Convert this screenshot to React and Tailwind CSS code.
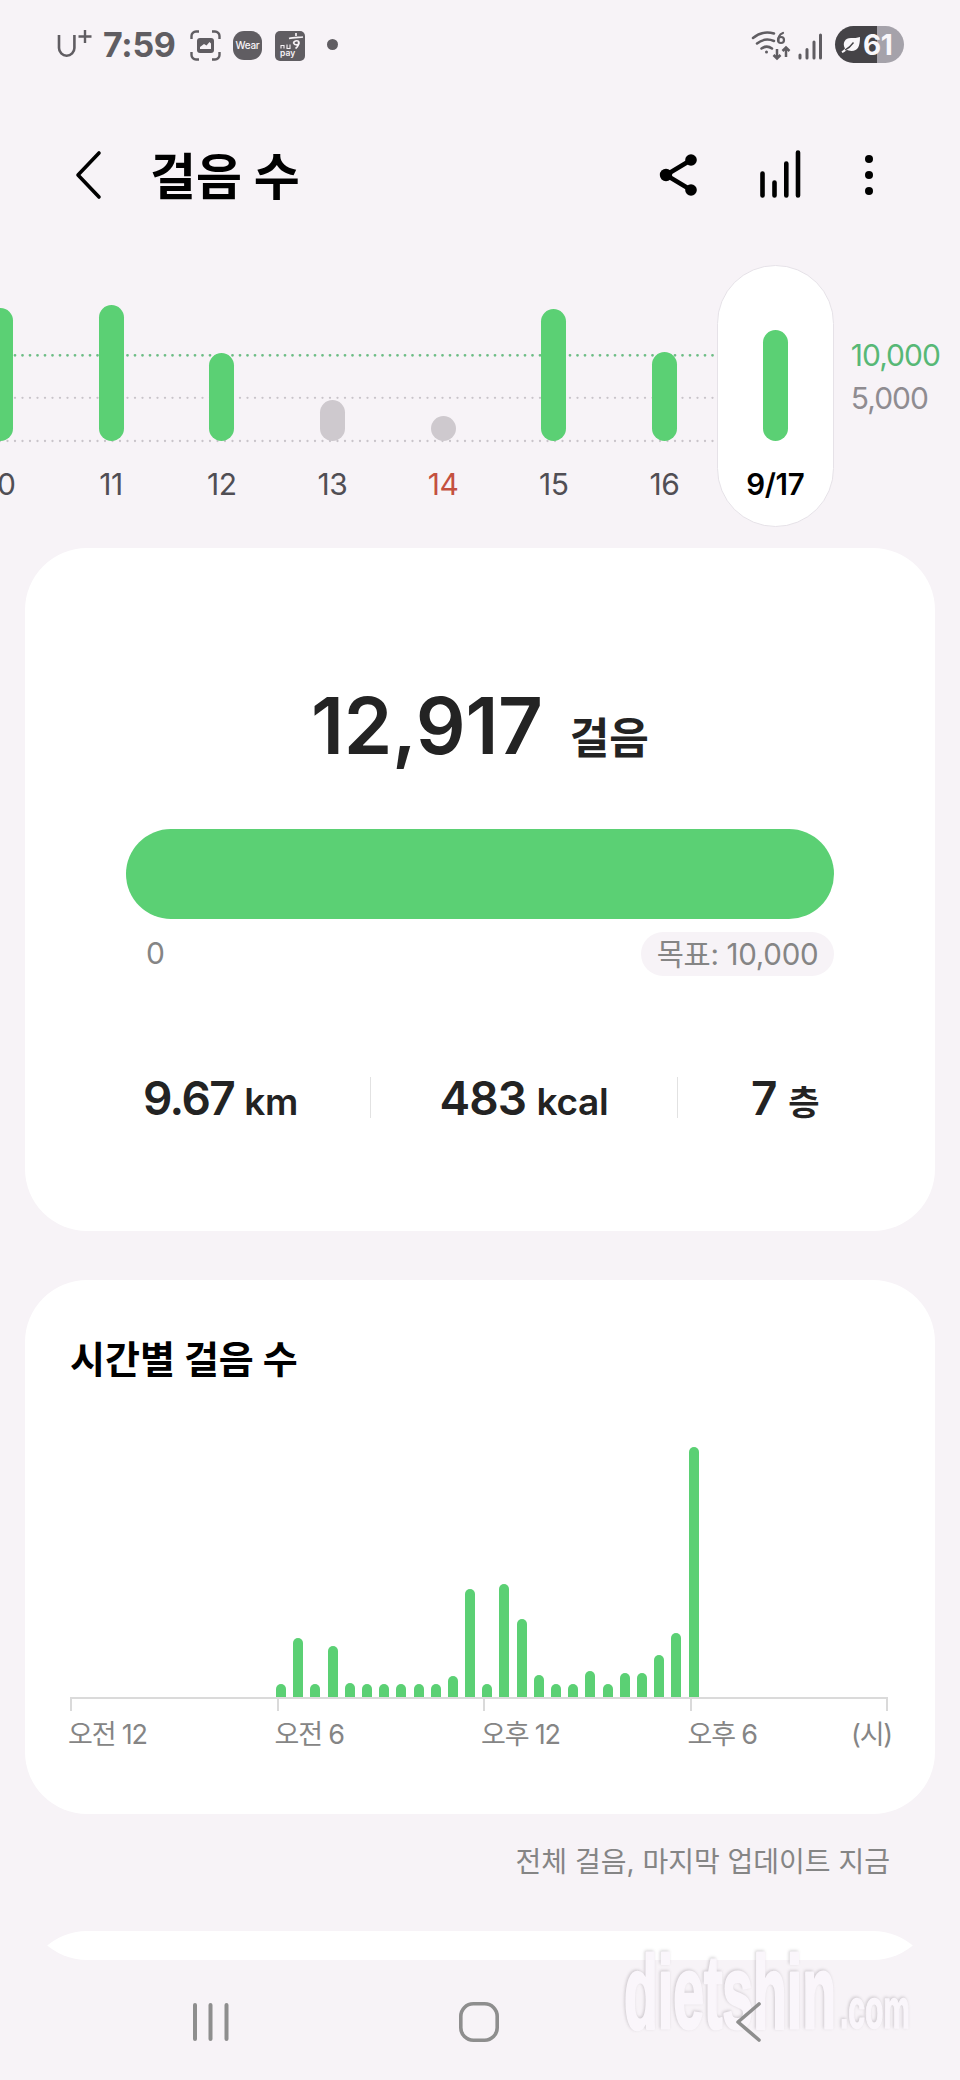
const DAYS = [
  { label: '10', height: 133 },
  { label: '11', height: 136 },
  { label: '12', height: 88 },
  { label: '13', height: 41, missed: true },
  { label: '14', height: 25, missed: true, holiday: true },
  { label: '15', height: 132 },
  { label: '16', height: 89 },
  { label: '9/17', height: 111, selected: true },
];

// one bar per half hour, starting at 6 AM
const HALF_HOURS = [
  13, 59, 13, 51, 14, 13, 13, 13, 13, 13, 21, 108, 13, 113, 78, 22, 13, 13, 26, 13, 24, 24, 42, 64, 250,
];

function StatusBar() {
  return (
    <div className="flex h-[89px] items-center pl-[57px] text-[#605d62]">
      <svg width="36" height="32" viewBox="0 0 36 32" className="mb-1" fill="none" stroke="currentColor">
        <path d="M2 8v13a7.700 7.700 0 0 0 15.400 0V8" strokeWidth="2.600" />
        <path d="M28 3v13M21.500 9.500h13" strokeWidth="2.400" />
      </svg>
      <span className="ml-[10px] w-[72px] text-[34px] leading-[40px] font-bold tracking-[-0.3px]">7:59</span>
      <svg width="31" height="31" viewBox="0 0 31 31" className="ml-[15px] mt-[2px]" fill="none" stroke="currentColor">
        <path d="M1.500 9V6A4.500 4.500 0 0 1 6 1.500h3M22 1.500h3A4.500 4.500 0 0 1 29.500 6v3M29.500 22v3a4.500 4.500 0 0 1-4.500 4.500h-3M9 29.500H6A4.500 4.500 0 0 1 1.500 25v-3" strokeWidth="2.400" />
        <rect x="7" y="8" width="17" height="15" rx="3" fill="currentColor" stroke="none" />
        <path d="M10 19v-2l4-3 2.500 1.500 3-3.500 1.500 1.500V19z" fill="#f7f3f7" stroke="none" />
      </svg>
      <div className="ml-[12px] mt-[2px] flex h-[29px] w-[29px] items-center justify-center rounded-[11px] bg-[#605d62] text-[10px] font-medium tracking-[-0.3px] text-[#f7f3f7]">
        Wear
      </div>
      <svg width="30" height="30" viewBox="0 0 30 30" className="ml-[13px] mt-[2px]">
        <rect width="30" height="30" rx="5" fill="#605d62" />
        <g fill="none" stroke="#f7f3f7" strokeWidth="1.700">
          <path d="M21 2v3M14 7.500c4-1 9-1 14-1.500M18.500 12c1-3 5.500-3 5.500 0 0 2.500-4.500 2.500-5.500 0M23.500 11c.5 3-1 5-3 6.500" />
          <path d="M6 14v3.500M6 14.500h3v3M12 13.500v4h3v-4" strokeWidth="1.100" />
        </g>
        <text x="5" y="25" fontSize="8.500" fontWeight="600" fill="#f7f3f7">pay</text>
      </svg>
      <div className="ml-[22px] h-[11px] w-[11px] rounded-full bg-[#605d62]" />
      <svg width="42" height="32" viewBox="0 0 42 32" className="ml-auto mt-[2px]" fill="none" stroke="currentColor" strokeWidth="2.500" strokeLinecap="round">
        <path d="M2 8c6-5 14-6.500 21-4.500M6 13.500c5-4 11-5 17-2.500M10.500 18.500c3.500-2.500 7-2.500 10.500 0" />
        <circle cx="15.500" cy="22" r="1.500" fill="currentColor" stroke="none" />
        <path d="M32 3c-4 1.500-5 5-4.500 7.500" strokeWidth="2.200" />
        <circle cx="30" cy="10" r="3" strokeWidth="2.200" />
        <path d="M26 19v9M22.500 25l3.500 3.500 3.500-3.500M35 27v-9M31.500 21l3.500-3.500L38.500 21" strokeLinecap="butt" />
      </svg>
      <svg width="25" height="28" viewBox="0 0 25 28" className="ml-[5px] mt-[2px]" stroke="currentColor" strokeWidth="3" strokeLinecap="round">
        <path d="M2 23v3M9 17.500V26M16 10v16M22.500 3v23" />
      </svg>
      <div className="mr-[56px] ml-[12px] flex h-[37px] w-[69px] items-center rounded-full bg-linear-to-r from-[#454347] from-61% to-[#a5a2aa] to-61%">
        <svg width="20" height="18" viewBox="0 0 20 18" className="ml-[6px] shrink-0">
          <path d="M19 1c0 9-2 14-8.500 14-2 0-3.500-.6-4.500-1.200C4.800 15 3.500 16 1.500 17L.5 15.500C2 14.500 3 13.500 4 12.500 1 7 4 2 10 2c3.500 0 6 0 9-1z" fill="#f9f7fa" />
          <path d="M4 14c3-1.500 6-4 8.500-7.500" stroke="#454347" strokeWidth="1.300" fill="none" />
        </svg>
        <span className="ml-[2px] text-[28px] leading-[36px] font-bold tracking-[-0.5px] text-[#f9f7fa]">61</span>
      </div>
    </div>
  );
}

function Header() {
  return (
    <header className="flex h-[172px] items-center pl-[74px] text-black">
      <svg width="28" height="50" viewBox="0 0 28 50" fill="none" stroke="currentColor" strokeWidth="3.600" strokeLinecap="round" strokeLinejoin="round">
        <path d="M25 3 4 25 25 47" />
      </svg>
      <h1 className="mt-[4px] ml-[48px] text-[50px] leading-[60px] font-bold">걸음 수</h1>
      <svg width="38" height="44" viewBox="0 0 38 44" className="ml-auto" fill="currentColor">
        <path d="M32 7 7 22l25 15" fill="none" stroke="currentColor" strokeWidth="4.500" />
        <circle cx="7" cy="22" r="6.200" />
        <circle cx="32" cy="7" r="5.800" />
        <circle cx="32" cy="37" r="5.800" />
      </svg>
      <svg width="44" height="50" viewBox="0 0 44 50" className="ml-[62px]" stroke="currentColor" strokeWidth="4.600" strokeLinecap="round">
        <path d="M3.500 23.500V45.500M15.500 32.500v13M27.300 13.500v32M39 2.500v43" />
      </svg>
      <svg width="12" height="44" viewBox="0 0 12 44" className="mr-[85px] ml-[60px]" fill="currentColor">
        <circle cx="6" cy="6" r="4" />
        <circle cx="6" cy="22" r="4" />
        <circle cx="6" cy="38" r="4" />
      </svg>
    </header>
  );
}

function DayColumn({ day }) {
  const bar = day.missed ? 'bg-[#cec9ce]' : 'bg-[#5bd074]';
  if (day.selected) {
    return (
      <div className="-ml-[3px] flex w-[117px] shrink-0 flex-col items-center justify-end rounded-full border border-[#e6e2e8] bg-white pb-[23px]">
        <div className={`w-[25px] rounded-full ${bar}`} style={{ height: day.height }} />
        <span className="mt-[24px] text-[29.500px] leading-[38px] font-semibold tracking-[-0.4px] text-black">{day.label}</span>
      </div>
    );
  }
  return (
    <div className="flex w-[110.700px] shrink-0 flex-col items-center justify-end pb-[24px]">
      <div className={`w-[25px] rounded-full ${bar}`} style={{ height: day.height }} />
      <span className={`mt-[24px] text-[30px] leading-[38px] tracking-[-0.5px] ${day.holiday ? 'text-[#c4503f]' : 'text-[#504e54]'}`}>
        {day.label}
      </span>
    </div>
  );
}

function DayChart() {
  return (
    <section className="relative mt-1 flex h-[262px] overflow-hidden">
      <svg width="718" height="262" viewBox="0 0 718 262" className="absolute top-0 left-0" fill="none" strokeLinecap="round" strokeDasharray="0 7.500">
        <path d="M0 90.300h718" stroke="#6dbd85" strokeWidth="2.800" />
        <path d="M0 132.800h718" stroke="#c9c4ca" strokeWidth="2.300" />
        <path d="M0 176h718" stroke="#c9c4ca" strokeWidth="2.300" />
      </svg>
      <div className="relative -ml-[55px] flex">
        {DAYS.map((day) => (
          <DayColumn key={day.label} day={day} />
        ))}
      </div>
      <div className="mt-[69px] ml-[17px] text-[30px] leading-[43px] tracking-[-1px]">
        <p className="text-[#57b876]">10,000</p>
        <p className="text-[#8f8c91]">5,000</p>
      </div>
    </section>
  );
}

function SummaryCard() {
  return (
    <section className="mx-[25px] mt-[21px] h-[683px] rounded-[62px] bg-white pt-[139px] text-[#232323]">
      <div className="flex h-[78px] items-baseline justify-center gap-[27px] leading-[78px] font-semibold">
        <span className="text-[78px] tracking-[-0.3px]">12,917</span>
        <span className="text-[43px] font-bold">걸음</span>
      </div>
      <div className="mx-[101px] mt-[64px] h-[90px] rounded-full bg-[#5bd074]" />
      <div className="mx-[101px] mt-[13px] flex h-[44px] items-center justify-between pl-[20px] text-[30px] leading-[42px] tracking-[-0.5px] text-[#858585]">
        <span className="pb-[2px]">0</span>
        <span className="flex h-[44px] w-[193px] items-center justify-center rounded-full bg-[#f7f3f7] pb-px text-[29.500px] tracking-[-0.3px] whitespace-nowrap">
          목표: 10,000
        </span>
      </div>
      <div className="mt-[101px] ml-[46px] flex h-[41px] text-[46px] leading-[43px] font-semibold whitespace-nowrap">
        <p className="w-[299px] text-center tracking-[-1.600px]">
          9.67 <span className="text-[37px] tracking-[-0.3px]">km</span>
        </p>
        <p className="w-[308px] border-x border-[#e2e2e2] text-center tracking-[-1px]">
          483 <span className="text-[37px] tracking-[-0.3px]">kcal</span>
        </p>
        <p className="w-[214px] text-center tracking-[-0.5px]">
          7 <span className="text-[34px] font-bold">층</span>
        </p>
      </div>
    </section>
  );
}

function HourlyCard() {
  return (
    <section className="mx-[25px] mt-[49px] h-[534px] rounded-[62px] bg-white px-[45px] pt-[59px]">
      <h2 className="text-[38px] leading-[40px] font-bold text-black">시간별 걸음 수</h2>
      <div className="mt-[68px] flex h-[250px] items-end gap-[7.200px] pl-[206px]">
        {HALF_HOURS.map((height, i) => (
          <div key={i} className="w-[10px] shrink-0 rounded-t-full bg-[#5bd074]" style={{ height }} />
        ))}
      </div>
      <div className="flex h-[14px] w-[818px] border-t-2 border-r-2 border-[#dadada]">
        <div className="w-[206.500px] border-l-2 border-[#dadada]" />
        <div className="w-[206.500px] border-l-2 border-[#dadada]" />
        <div className="w-[206.500px] border-l-2 border-[#dadada]" />
        <div className="border-l-2 border-[#dadada]" />
      </div>
      <div className="-mx-[2px] mt-[6px] flex text-[27px] leading-[36px] tracking-[-1.200px] text-[#858585]">
        <span className="w-[206.500px]">오전 12</span>
        <span className="w-[206.500px]">오전 6</span>
        <span className="w-[206.500px]">오후 12</span>
        <span>오후 6</span>
        <span className="ml-auto">(시)</span>
      </div>
    </section>
  );
}

function NavBar() {
  return (
    <nav className="relative flex h-[120px] items-start pt-[40px] pl-[190px] text-[#8e8e8e]">
      <svg width="42" height="44" viewBox="0 0 42 44" fill="none" stroke="currentColor" strokeWidth="4" strokeLinecap="round">
        <path d="M5 5v34M20.500 5v34M36.500 5v34" />
      </svg>
      <svg width="44" height="44" viewBox="0 0 44 44" className="ml-[225px]" fill="none" stroke="currentColor" strokeWidth="3.600">
        <rect x="3.800" y="3.800" width="36.400" height="36.400" rx="12.500" />
      </svg>
      <svg width="300" height="100" viewBox="0 0 300 100" className="absolute top-[-16px] left-[616px] overflow-visible drop-shadow-[-1px_-1px_1.500px_rgba(60,50,60,0.22)]">
        <g fill="#faf6fb" stroke="#faf6fb" strokeWidth="3" strokeLinejoin="round" fontFamily="Liberation Sans Narrow, Liberation Sans" fontWeight="700">
          <text x="8" y="84" fontSize="104" textLength="212" lengthAdjust="spacingAndGlyphs">dietshin</text>
          <text x="224" y="84" fontSize="56" strokeWidth="1.500" textLength="70" lengthAdjust="spacingAndGlyphs">.com</text>
        </g>
      </svg>
      <svg width="28" height="44" viewBox="0 0 28 44" className="relative ml-[234px]" fill="none" stroke="currentColor" strokeWidth="3.600" strokeLinecap="round" strokeLinejoin="round">
        <path d="M24 4 3 22l21 18" />
      </svg>
    </nav>
  );
}

export default function App() {
  return (
    <div lang="ko" className="h-[2080px] w-[960px] overflow-hidden bg-[#f7f3f7] font-['Inter','Noto_Sans_CJK_KR',sans-serif]">
      <StatusBar />
      <Header />
      <DayChart />
      <SummaryCard />
      <HourlyCard />
      <div className="mx-[25px] h-[146px] overflow-hidden rounded-b-[62px]">
        <p className="pt-[28px] pr-[45px] text-right text-[28px] leading-[40px] text-[#858585]">
          전체 걸음, 마지막 업데이트 지금
        </p>
        <div className="mt-[49px] h-[200px] rounded-[62px] bg-white" />
      </div>
      <NavBar />
    </div>
  );
}
